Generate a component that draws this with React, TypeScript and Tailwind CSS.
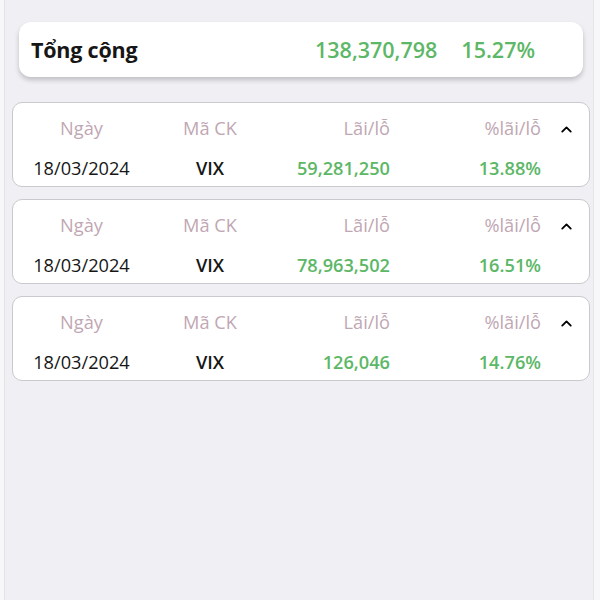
import { ChevronUp } from 'lucide-react'

type Row = { date: string; code: string; pnl: string; pct: string }

const rows: Row[] = [
  { date: '18/03/2024', code: 'VIX', pnl: '59,281,250', pct: '13.88%' },
  { date: '18/03/2024', code: 'VIX', pnl: '78,963,502', pct: '16.51%' },
  { date: '18/03/2024', code: 'VIX', pnl: '126,046', pct: '14.76%' },
]

export default function App() {
  return (
    <div
      className="flex min-h-[600px] bg-[#f7f7f9] pl-[4px] pr-[6px] text-[#161616]"
      style={{ fontFamily: '"Open Sans", "Noto Sans", sans-serif' }}
    >
      <main className="flex-1 border-x border-[#e3e3e8] bg-[#efeff4] pt-[22px]">
        <section className="ml-[14px] mr-[10px] flex h-[55px] items-center rounded-xl bg-white pt-[1px] pl-3 pr-[48px] shadow-[0_3px_5px_rgba(0,0,0,0.2)]">
          <h1 className="flex-1 text-[21.5px] font-bold tracking-[-0.01em]">Tổng cộng</h1>
          <span className="text-[21.5px] font-semibold text-[#5cb766]">138,370,798</span>
          <span className="ml-[24px] text-[21.5px] font-semibold text-[#5cb766]">15.27%</span>
        </section>

        <div className="mt-[25px] ml-[7px] mr-[3px] flex flex-col gap-[12px]">
          {rows.map((r, i) => (
            <TradeCard key={i} row={r} />
          ))}
        </div>
      </main>
    </div>
  )
}

function TradeCard({ row }: { row: Row }) {
  return (
    <div className="flex h-[85px] flex-col gap-[8px] rounded-[10px] border border-[#c9c9ce] bg-white pt-[10px] text-[18.2px]">
      <div className="grid h-[32px] grid-cols-[137px_120px_120px_151px_1fr] items-center text-[#bfa7b3]">
        <span className="text-center">Ngày</span>
        <span className="text-center">Mã CK</span>
        <span className="text-right">Lãi/lỗ</span>
        <span className="text-right">%lãi/lỗ</span>
        <span className="flex justify-center pl-[3px]">
          <ChevronUp size={17} strokeWidth={2.6} className="text-black" />
        </span>
      </div>
      <div className="grid h-[32px] grid-cols-[137px_120px_120px_151px_1fr] items-center">
        <span className="text-center">{row.date}</span>
        <span className="text-center font-semibold">{row.code}</span>
        <span className="text-right font-semibold text-[#5cb766]">{row.pnl}</span>
        <span className="text-right font-semibold text-[#5cb766]">{row.pct}</span>
        <span />
      </div>
    </div>
  )
}
